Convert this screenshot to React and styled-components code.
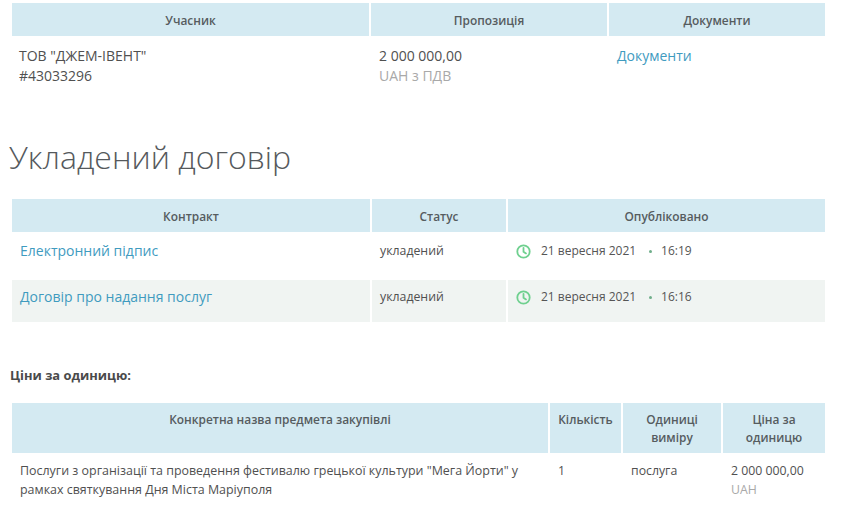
import React from "react";
import styled, { createGlobalStyle } from "styled-components";

const Global = createGlobalStyle`
  html, body { margin: 0; padding: 0; background: #fff; }
  body { font-family: "Open Sans", "Noto Sans", sans-serif; color: #444; overflow: hidden; }
`;
const Page = styled.div`
  width: 843px; height: 522px; overflow: hidden; box-sizing: border-box;
  padding: 3px 18px 0 12px;
`;
const Row = styled.div`
  display: grid; grid-template-columns: ${p => p.$cols}; column-gap: 2px;
  margin-top: ${p => p.$top || 0}px;
`;
const Head = styled.div`
  background: #d4eaf2; color: #565c5f; font-size: 11.9px; font-weight: 600; line-height: 18px;
  text-align: center; height: ${p => p.$h}px; box-sizing: border-box;
  padding: ${p => p.$pad}px 6px 0;
`;
const Cell = styled.div`
  background: ${p => p.$alt ? "#f0f4f2" : "#fff"};
  height: ${p => p.$h}px; box-sizing: border-box; padding: ${p => p.$pad}px 8px 0 ${p => p.$left || 8}px;
  font-size: ${p => p.$size}px; line-height: ${p => p.$lh}px; color: #505050;
  white-space: nowrap;
`;
const Muted = styled.div`color: #a9a9a9;`;
const LinkText = styled.a`color: #3f9bbf; text-decoration: none; font-size: 14px;`;
const Title = styled.h2`
  margin: 29px 0 0 -3px; font-size: 32px; line-height: 44px; font-weight: 300; color: #55595c;
`;
const Sub = styled.h4`
  margin: 43px 0 0 -2px; font-size: 12.9px; line-height: 20px; font-weight: 700; color: #4a4a4a;
`;
const When = styled.div`
  display: flex; align-items: center; font-size: 12px; color: #555; height: 18px;
`;
const Clock = styled.svg`width: 15px; height: 15px; flex: none; margin-right: 10px;`;
const Dot = styled.span`
  width: 3px; height: 3px; border-radius: 50%; background: #6fae8a; margin: 0 9px 0 13px;
`;

const ClockIcon = () => (
  <Clock viewBox="0 0 15 15" fill="none" stroke="#6fd08f" strokeWidth="1.8">
    <circle cx="7.5" cy="7.5" r="6.2" />
    <path d="M7.5 3.8V7.7L10 9.4" strokeLinecap="round" />
  </Clock>
);

const Published = ({ time }) => (
  <When><ClockIcon />21 вересня 2021<Dot />{time}</When>
);

const c1 = "357px 236px 216px";
const c2 = "358px 134px 317px";
const c3 = "536px 71px 98px 102px";

export default function App() {
  return (
    <Page>
      <Global />
      <Row $cols={c1}>
        <Head $h={33} $pad={8}>Учасник</Head>
        <Head $h={33} $pad={8}>Пропозиція</Head>
        <Head $h={33} $pad={8}>Документи</Head>
      </Row>
      <Row $cols={c1}>
        <Cell $h={70} $pad={10} $left={7} $size={14} $lh={20}>ТОВ "ДЖЕМ-ІВЕНТ"<br />#43033296</Cell>
        <Cell $h={70} $pad={10} $size={14} $lh={20}>2 000 000,00<Muted>UAH з ПДВ</Muted></Cell>
        <Cell $h={70} $pad={10} $size={14} $lh={20}><LinkText href="#">Документи</LinkText></Cell>
      </Row>
      <Title>Укладений договір</Title>
      <Row $cols={c2} $top={20}>
        <Head $h={33} $pad={8}>Контракт</Head>
        <Head $h={33} $pad={8}>Статус</Head>
        <Head $h={33} $pad={8}>Опубліковано</Head>
      </Row>
      <Row $cols={c2}>
        <Cell $h={48} $pad={10} $size={12.3} $lh={18}><LinkText href="#">Електронний підпис</LinkText></Cell>
        <Cell $h={48} $pad={10} $size={12.3} $lh={18}>укладений</Cell>
        <Cell $h={48} $pad={10} $size={12.3} $lh={18}><Published time="16:19" /></Cell>
      </Row>
      <Row $cols={c2}>
        <Cell $alt $h={42} $pad={8} $size={12.3} $lh={18}><LinkText href="#">Договір про надання послуг</LinkText></Cell>
        <Cell $alt $h={42} $pad={8} $size={12.3} $lh={18}>укладений</Cell>
        <Cell $alt $h={42} $pad={8} $size={12.3} $lh={18}><Published time="16:16" /></Cell>
      </Row>
      <Sub>Ціни за одиницю:</Sub>
      <Row $cols={c3} $top={18}>
        <Head $h={50} $pad={7}>Конкретна назва предмета закупівлі</Head>
        <Head $h={50} $pad={7}>Кількість</Head>
        <Head $h={50} $pad={7}>Одиниці виміру</Head>
        <Head $h={50} $pad={7}>Ціна за одиницю</Head>
      </Row>
      <Row $cols={c3}>
        <Cell $h={66} $pad={9} $size={12.45} $lh={18.5}>Послуги з організації та проведення фестивалю грецької культури "Мега Йорти" у<br />рамках святкування Дня Міста Маріуполя</Cell>
        <Cell $h={66} $pad={9} $size={12.3} $lh={18.5}>1</Cell>
        <Cell $h={66} $pad={9} $size={12.3} $lh={18.5}>послуга</Cell>
        <Cell $h={66} $pad={9} $size={12.3} $lh={18.5}>2 000 000,00<Muted>UAH</Muted></Cell>
      </Row>
    </Page>
  );
}
